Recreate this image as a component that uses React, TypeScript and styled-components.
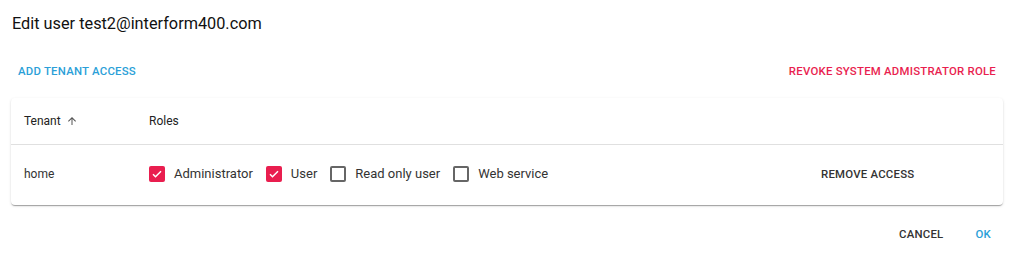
import React, { useState } from "react";
import styled, { createGlobalStyle } from "styled-components";

const GlobalStyle = createGlobalStyle`
  body {
    margin: 0;
    background: #ffffff;
    font-family: Roboto, "Liberation Sans", Arial, sans-serif;
    color: rgba(0, 0, 0, 0.87);
  }
`;

const BLUE = "#2b9fd8";
const RED = "#e91e4f";

interface Role {
  name: string;
  checked: boolean;
}

const initialRoles: Role[] = [
  { name: "Administrator", checked: true },
  { name: "User", checked: true },
  { name: "Read only user", checked: false },
  { name: "Web service", checked: false },
];

export default function App() {
  const [roles, setRoles] = useState(initialRoles);
  const toggle = (i: number) => {
    setRoles(roles.map((r, idx) => (idx === i ? { ...r, checked: !r.checked } : r)));
  };

  return (
    <>
      <GlobalStyle />
      <Dialog>
        <Title>Edit user test2@interform400.com</Title>
        <ActionRow>
          <TextButton $color={BLUE}>Add tenant access</TextButton>
          <TextButton $color={RED}>Revoke system admistrator role</TextButton>
        </ActionRow>
        <Card>
          <HeaderRow>
            <TenantCell>
              Tenant
              <svg width="12" height="12" viewBox="0 0 24 24">
                <path
                  d="M4 12l1.41 1.41L11 7.83V20h2V7.83l5.58 5.59L20 12l-8-8-8 8z"
                  fill="#555"
                />
              </svg>
            </TenantCell>
            <RolesCell>Roles</RolesCell>
          </HeaderRow>
          <BodyRow>
            <TenantCell>home</TenantCell>
            <RolesCell>
              {roles.map((r, i) => (
                <RoleLabel key={r.name} onClick={() => toggle(i)}>
                  <Box $checked={r.checked}>
                    {r.checked && (
                      <svg width="12" height="12" viewBox="0 0 24 24">
                        <path
                          d="M4 12.5l5 5L20 6.5"
                          fill="none"
                          stroke="#fff"
                          strokeWidth="3"
                        />
                      </svg>
                    )}
                  </Box>
                  {r.name}
                </RoleLabel>
              ))}
            </RolesCell>
            <ActionCell>
              <TextButton $color="#333">Remove access</TextButton>
            </ActionCell>
          </BodyRow>
        </Card>
        <Footer>
          <TextButton $color="#333">Cancel</TextButton>
          <TextButton $color={BLUE}>Ok</TextButton>
        </Footer>
      </Dialog>
    </>
  );
}

const Dialog = styled.div`
  width: 1016px;
  height: 254px;
  box-sizing: border-box;
  padding: 0 13px 0 11px;
  display: flex;
  flex-direction: column;
`;

const Title = styled.h2`
  margin: 0;
  padding: 12px 1px 0;
  font-size: 16.3px;
  line-height: 24px;
  font-weight: 400;
  color: #111;
`;

const ActionRow = styled.div`
  margin-top: 21px;
  display: flex;
  justify-content: space-between;
  align-items: center;
  height: 28px;
`;

const TextButton = styled.button<{ $color: string }>`
  border: none;
  background: none;
  padding: 6px 7px;
  font-family: Roboto, "Liberation Sans", Arial, sans-serif;
  font-size: 11.4px;
  font-weight: 500;
  letter-spacing: 0.02em;
  text-transform: uppercase;
  color: ${(p) => p.$color};
  cursor: pointer;
  line-height: 16px;
  border-radius: 4px;
`;

const Card = styled.div`
  margin-top: 13px;
  background: #fff;
  border-radius: 4px;
  box-shadow: 0 2px 1px -1px rgba(0, 0, 0, 0.2), 0 1px 1px 0 rgba(0, 0, 0, 0.14),
    0 1px 3px 0 rgba(0, 0, 0, 0.12);
`;

const HeaderRow = styled.div`
  display: flex;
  align-items: center;
  height: 46px;
  border-bottom: 1px solid #e0e0e0;
  font-size: 12px;
  font-weight: 400;
  color: #222;
`;

const BodyRow = styled.div`
  display: flex;
  align-items: center;
  height: 60px;
  box-sizing: border-box;
  padding-bottom: 3px;
  font-size: 12px;
  color: #333;
`;

const TenantCell = styled.div`
  width: 138px;
  padding-left: 13px;
  box-sizing: border-box;
  display: flex;
  align-items: center;
  gap: 5px;
`;

const RolesCell = styled.div`
  flex: 1;
  display: flex;
  align-items: center;
  gap: 13px;
`;

const ActionCell = styled.div`
  width: 189px;
  display: flex;
  align-items: center;
`;

const RoleLabel = styled.label`
  display: flex;
  align-items: center;
  gap: 9px;
  font-size: 13px;
  color: #333;
  cursor: pointer;
`;

const Box = styled.span<{ $checked: boolean }>`
  width: 16px;
  height: 16px;
  box-sizing: border-box;
  border-radius: 2px;
  display: flex;
  align-items: center;
  justify-content: center;
  background: ${(p) => (p.$checked ? RED : "#fff")};
  border: ${(p) => (p.$checked ? "none" : "2px solid #666")};
`;

const Footer = styled.div`
  margin-top: 15px;
  display: flex;
  justify-content: flex-end;
  gap: 18px;
  padding-right: 5px;
`;
